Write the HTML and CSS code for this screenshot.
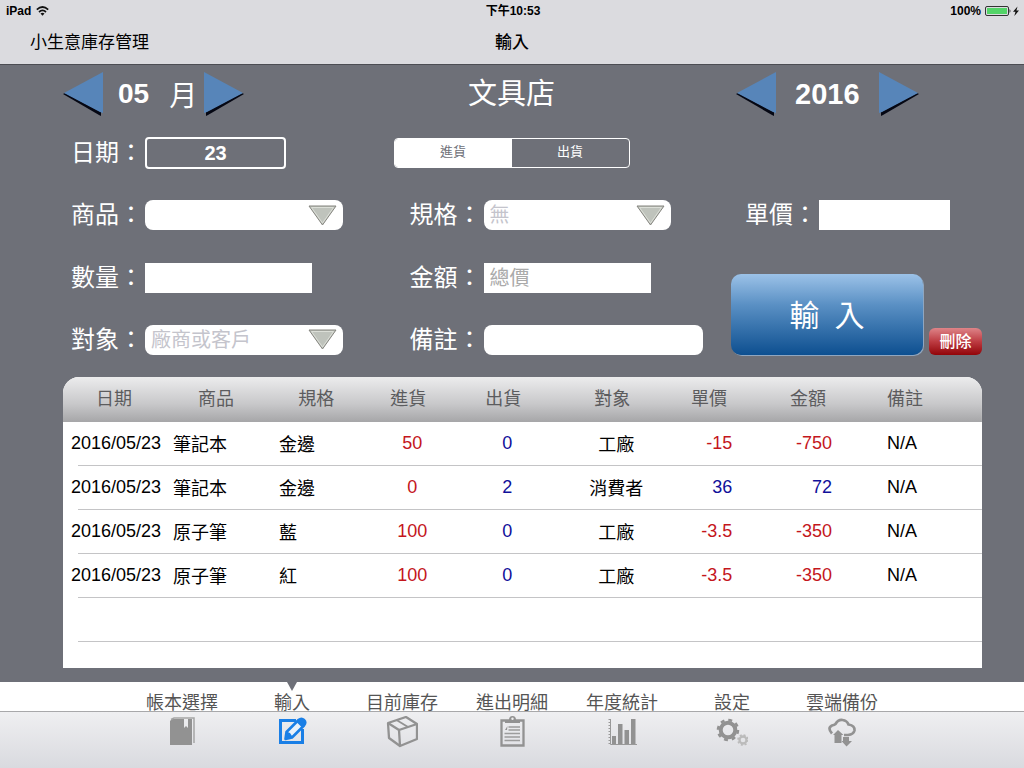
FILE: index.html
```html
<!DOCTYPE html>
<html lang="zh-TW">
<head>
<meta charset="utf-8">
<meta name="viewport" content="width=device-width, initial-scale=1">
<title>小生意庫存管理</title>
<link rel="stylesheet" href="styles.css">
</head>
<body>
<header class="topbar">
  <div class="status">
    <span class="status-left">iPad
      <svg width="13" height="10" viewBox="0 0 13 10" aria-hidden="true"><g fill="none" stroke="#111" stroke-width="1.7"><path d="M.8 3.6Q6.5-1.6 12.2 3.6"/><path d="M3 6Q6.500 2.800 10 6"/></g><path d="M4.500 7.500Q6.500 5.800 8.500 7.500L6.500 9.700Z" fill="#111"/></svg>
    </span>
    <span>下午10:53</span>
    <span class="status-right">100%
      <svg width="35" height="12" viewBox="0 0 35 12" aria-hidden="true"><rect x=".5" y="1.500" width="23" height="9" rx="1.500" fill="none" stroke="#333"/><rect x="2" y="3" width="20" height="6" fill="#53d468"/><path d="M24.500 4q2 2 0 4z" fill="#333"/><path d="M32.500 1.500L28 6.700h2.500L29.300 11l4.700-5.500h-2.600z" fill="#111"/></svg>
    </span>
  </div>
  <div class="titlebar">
    <a class="app-name" href="#">小生意庫存管理</a>
    <h1 class="page-title">輸入</h1>
  </div>
</header>

<main class="main">
  <form class="entry">
    <div class="stepper">
      <button type="button" class="arrow" aria-label="上個月"><svg width="41" height="44" viewBox="0 0 41 44"><path d="M0 22L2 21L38 40V44L36 43Z" fill="#050713"/><path d="M1 21L40 0V41L37 40Z" fill="#5785b9"/></svg></button>
      <span class="month"><span>05</span><span class="unit">月</span></span>
      <button type="button" class="arrow" aria-label="下個月"><svg width="41" height="44" viewBox="0 0 41 44"><path d="M41 22L39 21L3 40V44L5 43Z" fill="#050713"/><path d="M40 21L1 0V41L4 40Z" fill="#5785b9"/></svg></button>
    </div>
    <h2 class="shop">文具店</h2>
    <div class="stepper year">
      <button type="button" class="arrow" aria-label="上一年"><svg width="41" height="44" viewBox="0 0 41 44"><path d="M0 22L2 21L38 40V44L36 43Z" fill="#050713"/><path d="M1 21L40 0V41L37 40Z" fill="#5785b9"/></svg></button>
      <span>2016</span>
      <button type="button" class="arrow" aria-label="下一年"><svg width="41" height="44" viewBox="0 0 41 44"><path d="M41 22L39 21L3 40V44L5 43Z" fill="#050713"/><path d="M40 21L1 0V41L4 40Z" fill="#5785b9"/></svg></button>
    </div>

    <div class="field"><label for="day">日期：</label><input id="day" class="day" type="text" value="23"></div>
    <div class="segmented" role="group" aria-label="進出貨">
      <button type="button" class="segment segment-on" aria-pressed="true">進貨</button>
      <button type="button" class="segment" aria-pressed="false">出貨</button>
    </div>
    <span></span>

    <div class="field"><label for="item">商品：</label>
      <span class="combo"><select id="item"><option></option><option>筆記本</option><option>原子筆</option></select>
      <svg class="caret" width="29" height="21" viewBox="0 0 29 21" aria-hidden="true"><path d="M1 1H28L14.500 20Z" fill="#bfc3bc" stroke="#85857f"/><path d="M3.500 2.500H25.500L14.500 18Z" fill="none" stroke="#dcdfd8"/></svg></span></div>
    <div class="field indent"><label for="spec">規格：</label>
      <span class="combo combo-small"><select id="spec"><option>無</option></select>
      <svg class="caret" width="29" height="21" viewBox="0 0 29 21" aria-hidden="true"><path d="M1 1H28L14.500 20Z" fill="#bfc3bc" stroke="#85857f"/><path d="M3.500 2.500H25.500L14.500 18Z" fill="none" stroke="#dcdfd8"/></svg></span></div>
    <div class="field price"><label for="price">單價：</label><input id="price" class="box box-price" type="text"></div>

    <div class="field"><label for="qty">數量：</label><input id="qty" class="box" type="text"></div>
    <div class="field indent"><label for="total">金額：</label><input id="total" class="box" type="text" placeholder="總價"></div>
    <div class="actions">
      <button type="submit" class="submit">輸&ensp;入</button>
      <button type="button" class="delete">刪除</button>
    </div>

    <div class="field"><label for="party">對象：</label>
      <span class="combo"><select id="party"><option>廠商或客戶</option></select>
      <svg class="caret" width="29" height="21" viewBox="0 0 29 21" aria-hidden="true"><path d="M1 1H28L14.500 20Z" fill="#bfc3bc" stroke="#85857f"/><path d="M3.500 2.500H25.500L14.500 18Z" fill="none" stroke="#dcdfd8"/></svg></span></div>
    <div class="field indent"><label for="note">備註：</label><input id="note" class="note" type="text"></div>
  </form>

  <section class="panel">
    <table class="records">
      <colgroup><col class="w-date"><col class="w-item"><col class="w-spec"><col class="w-in"><col class="w-out"><col class="w-party"><col class="w-price"><col class="w-total"><col class="w-note"></colgroup>
      <thead>
        <tr><th>日期</th><th>商品</th><th>規格</th><th class="h-mid">進貨</th><th class="h-mid">出貨</th><th class="h-mid">對象</th><th>單價</th><th class="h-total">金額</th><th class="h-note">備註</th></tr>
      </thead>
      <tbody>
        <tr><td class="text">2016/05/23</td><td class="text">筆記本</td><td class="spec">金邊</td><td class="red">50</td><td class="blue">0</td><td>工廠</td><td class="num red">-15</td><td class="num total red">-750</td><td class="remark">N/A</td></tr>
        <tr><td class="text">2016/05/23</td><td class="text">筆記本</td><td class="spec">金邊</td><td class="red">0</td><td class="blue">2</td><td>消費者</td><td class="num blue">36</td><td class="num total blue">72</td><td class="remark">N/A</td></tr>
        <tr><td class="text">2016/05/23</td><td class="text">原子筆</td><td class="spec">藍</td><td class="red">100</td><td class="blue">0</td><td>工廠</td><td class="num red">-3.5</td><td class="num total red">-350</td><td class="remark">N/A</td></tr>
        <tr><td class="text">2016/05/23</td><td class="text">原子筆</td><td class="spec">紅</td><td class="red">100</td><td class="blue">0</td><td>工廠</td><td class="num red">-3.5</td><td class="num total red">-350</td><td class="remark">N/A</td></tr>
        <tr><td colspan="9"></td></tr>
      </tbody>
    </table>
  </section>
</main>

<nav class="tabs" aria-label="主選單">
  <a class="tab" href="#"><span class="tab-label">帳本選擇</span>
    <svg class="icon" viewBox="0 0 32 32"><path d="M6 3H18V12L20 10L22 12V3H26V29H4V5Z" fill="#929292"/><path d="M5 3.500L8 2H28V27" fill="none" stroke="#a5a5a5" stroke-width="1.500"/></svg></a>
  <a class="tab tab-active" href="#" aria-current="page"><span class="tab-label">輸入</span>
    <svg class="icon" viewBox="0 0 32 32"><path d="M20 4.500H4.500V26.500H26.500V13" fill="none" stroke="#1a7fe6" stroke-width="3"/><path d="M9.500 23L10.500 16L22.500 4Q25.500 1.500 28 4T28 9.500L16 21.500Z" fill="#eaf2fb" stroke="#1a7fe6" stroke-width="2.600" stroke-linejoin="round"/><path d="M10.500 15.500L14 17L17 21.500L9 23ZM20.500 6L26 11.500L29 7.500Q29 3 25 2Z" fill="#1a7fe6"/></svg></a>
  <a class="tab" href="#"><span class="tab-label">目前庫存</span>
    <svg class="icon" viewBox="0 0 32 32"><g fill="none" stroke="#929292" stroke-width="2.300" stroke-linejoin="round"><path d="M2 7L20 1L31 8V23L14 30L3 22Z"/><path d="M2 7L13 14L31 8M13 14L14 30"/><path d="M10.500 4L22 11" stroke-width="1.800"/></g></svg></a>
  <a class="tab" href="#"><span class="tab-label">進出明細</span>
    <svg class="icon" viewBox="0 0 32 32"><path d="M5.500 4.500H27.500V29.500H5.500Z" fill="none" stroke="#929292" stroke-width="2.300"/><path d="M9 7V4H13Q13 0 16.500 0T20 4H24V7Z" fill="#929292"/><circle cx="16.500" cy="2.800" r="1.200" fill="#eee"/><path d="M12.500 11H24M12.500 14H24M8.500 17.500H24M8.500 21H24M8.500 24.500H24" stroke="#9c9c9c" stroke-width="1.300"/><path d="M11.500 10L9 14H11Z" fill="#929292"/></svg></a>
  <a class="tab" href="#"><span class="tab-label">年度統計</span>
    <svg class="icon" viewBox="0 0 32 32"><path d="M4.500 3V28.500H31" fill="none" stroke="#999"/><path d="M3.500 3V28" stroke="#999" stroke-width="2" stroke-dasharray="1 2"/><path d="M6 20H10V28H6ZM12 8H16.500V28H12ZM18.500 14H23V28H18.500ZM25 3H29.500V28H25Z" fill="#929292"/></svg></a>
  <a class="tab" href="#"><span class="tab-label">設定</span>
    <svg class="icon" viewBox="0 0 32 32"><circle cx="12" cy="14" r="7.300" fill="none" stroke="#929292" stroke-width="4"/><circle cx="12" cy="14" r="10" fill="none" stroke="#929292" stroke-width="2.500" stroke-dasharray="3.900 3.954"/><circle cx="27" cy="24" r="3.500" fill="none" stroke="#bbb" stroke-width="2.300"/><circle cx="27" cy="24" r="5" fill="none" stroke="#bbb" stroke-width="1.700" stroke-dasharray="2 1.927"/></svg></a>
  <a class="tab" href="#"><span class="tab-label">雲端備份</span>
    <svg class="icon" viewBox="0 0 32 32"><path d="M6 17.500Q1 12 6 9.500Q8.500 9 9.500 8Q12 3.500 16.500 4Q21 4.500 22.500 8.500Q29 9.500 28.500 14.500Q27.500 18.500 22 19H18" fill="none" stroke="#929292" stroke-width="2.700"/><path d="M12 14L17.500 19H15.500V27H8.500V19H7Z" fill="#929292"/><path d="M17 21H23V25H26L20.500 30.500L15.500 25H17Z" fill="#929292"/></svg></a>
</nav>
</body>
</html>
```

FILE: styles.css
```css
* { box-sizing: border-box; }

body {
  margin: 0;
  min-height: 100vh;
  display: flex;
  flex-direction: column;
  background: #6e7078;
  color: #000;
  font-family: "Liberation Sans", "Noto Sans CJK TC", sans-serif;
  font-size: 18px;
}

button, input, select { font: inherit; margin: 0; }
button { padding: 0; border: 0; cursor: pointer; }
a { color: inherit; text-decoration: none; }

/* Top bar */
.topbar { background: #dbdbdf; border-bottom: 1px solid #4c4d53; }
.status {
  display: grid;
  grid-template-columns: 1fr auto 1fr;
  align-items: center;
  height: 22px;
  padding: 0 4px 0 6px;
  font-size: 12px;
  line-height: 14px;
  font-weight: bold;
}
.status-left, .status-right { display: flex; align-items: center; gap: 5px; }
.status-right { justify-content: flex-end; gap: 4px; }
.titlebar {
  display: grid;
  grid-template-columns: 1fr auto 1fr;
  align-items: center;
  height: 42px;
  padding: 0 30px;
}
.app-name, .page-title { font-size: 17px; line-height: 24px; }
.page-title { margin: 0; font-weight: 500; }

/* Entry form */
.main { flex: 1; display: flex; flex-direction: column; padding: 0 42px 14px 63px; }
.entry {
  display: grid;
  grid-template-columns: 331fr 338fr 250fr;
  grid-template-rows: 58px 60px 64px 62px 61px;
  align-items: center;
  color: #fff;
}
.stepper { display: flex; align-items: center; font-size: 28px; font-weight: bold; gap: 14px; }
.month { display: flex; align-items: center; gap: 20px; }
.unit { font-weight: 400; }
.stepper .month + .arrow { margin-left: -8px; }
.year { padding-left: 5px; gap: 18px; font-size: 29px; }
.arrow { background: none; line-height: 0; }
.arrow svg { display: block; }
.shop { width: 236px; margin: 0; text-align: center; font-size: 29px; line-height: 40px; font-weight: 400; }

.field { display: flex; align-items: center; gap: 2px; padding-left: 8px; }
.indent { padding-left: 16px; }
.price { padding-left: 14px; }
.field label { font-size: 24px; line-height: 32px; white-space: nowrap; }
.field input, .field select {
  height: 30px;
  border: 0;
  padding: 0 6px;
  background: #fff;
  color: #222;
  font-size: 20px;
}
.field input::placeholder { color: #aaa; opacity: 1; }
.field .day {
  width: 141px;
  height: 32px;
  border: 2px solid #fff;
  border-radius: 4px;
  background: transparent;
  color: #fff;
  font-weight: bold;
  text-align: center;
}
.box { width: 167px; }
.box-price { width: 131px; }
.field .note { width: 219px; border-radius: 8px; }
.combo { display: grid; align-items: center; width: 198px; }
.combo-small { width: 187px; }
.combo > * { grid-area: 1 / 1; }
.field .combo select { width: 100%; border-radius: 8px; appearance: none; color: #c4c4cc; }
.caret { justify-self: end; margin-right: 6px; pointer-events: none; }

.segmented {
  display: flex;
  width: 236px;
  height: 30px;
  border: 1px solid #fff;
  border-radius: 4px;
  overflow: hidden;
}
.segment { flex: 1; background: transparent; color: #fff; font-size: 13px; line-height: 16px; padding-bottom: 3px; }
.segment-on { background: #fff; color: #6e7078; }

.actions {
  grid-column: 3;
  grid-row: 4 / span 2;
  align-self: end;
  display: flex;
  align-items: flex-end;
  gap: 6px;
  padding-bottom: 15px;
}
.submit {
  width: 192px;
  height: 81px;
  border-radius: 10px;
  background: linear-gradient(#9cc2e8, #5a90c4 38%, #0d4f90);
  box-shadow: 1px 1px 0 #8fa6c0;
  color: #fff;
  font-size: 30px;
}
.submit, .delete { padding-bottom: 3px; }
.delete {
  width: 53px;
  height: 27px;
  border-radius: 6px;
  background: linear-gradient(#de8488, #bd3c42 50%, #920409);
  color: #fff;
  font-size: 16px;
  font-weight: 500;
}

/* Records */
.panel { flex: 1; margin-top: 7px; background: #fff; border-radius: 16px 16px 0 0; overflow: hidden; }
.records { width: 100%; table-layout: fixed; border-collapse: collapse; }
.records th, .records td { height: 44px; padding: 0 0 2px; text-align: center; white-space: nowrap; }
.records thead tr { background: linear-gradient(#ececed, #c8c8ca 60%, #a6a6a8); }
.records th { height: 45px; color: #5c5c5e; font-weight: normal; padding-bottom: 5px; }
.records tbody tr {
  background: linear-gradient(#c4c4c6, #c4c4c6) right bottom / calc(100% - 15px) 1px no-repeat;
}
.w-date, .w-item { width: 11.1%; }
.w-spec { width: 10.7%; }
.w-in { width: 10.2%; }
.w-out { width: 10.5%; }
.w-party { width: 13.2%; }
.w-price { width: 7%; }
.w-total { width: 13.7%; }
.w-note { width: 12.5%; }
.records .h-mid { padding-right: 8px; }
.records .h-total { padding-left: 8px; }
.records .h-note, .records .remark { text-align: left; padding-left: 20px; }
.records .text { text-align: left; padding-left: 8px; }
.records .spec { text-align: left; padding-left: 12px; }
.records .num { text-align: right; padding-right: 9px; }
.records .total { padding-right: 35px; }
.records .red { color: #c4161c; }
.records .blue { color: #10109a; }

/* Bottom tabs */
.tabs {
  display: flex;
  justify-content: center;
  height: 86px;
  background: linear-gradient(#fff 29px, #a8a8aa 29px, #a8a8aa 30px, #efeff1 30px, #d9dadf);
}
.tab {
  position: relative;
  flex: 0 1 110px;
  display: flex;
  flex-direction: column;
  align-items: center;
  gap: 3px;
  padding-top: 11px;
  color: #555;
}
.tab-label { line-height: 20px; white-space: nowrap; }
.tab-active::before {
  content: "";
  position: absolute;
  top: 0;
  border: 5px solid transparent;
  border-top: 9px solid #6e7078;
  border-bottom: 0;
}
.icon { width: 32px; height: 32px; }
```
